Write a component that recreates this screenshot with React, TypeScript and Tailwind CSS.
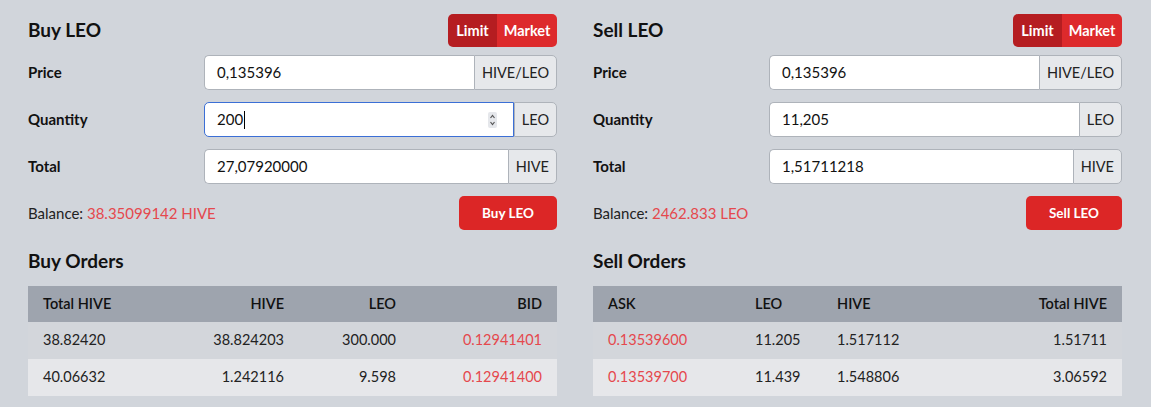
import React from "react";

function Field({ label, value, unit, focused, spinner }: { label: string; value: string; unit: string; focused?: boolean; spinner?: boolean }) {
  return (
    <div className="flex items-center">
      <div className="w-[176px] shrink-0 text-[15px] font-bold text-[#111]">{label}</div>
      <div className="flex h-[35px] flex-1">
        <div
          className={
            focused
              ? "flex flex-1 items-center rounded-l-[5px] border border-[#3b6fd6] bg-white pl-3 pr-3 text-[15px] text-[#111]"
              : "flex flex-1 items-center rounded-l-[5px] border border-r-0 border-[#aeb3ba] bg-white pl-3 pr-3 text-[15px] text-[#111]"
          }
        >
          <span>{value}</span>
          {focused && <span className="ml-[1px] h-[18px] w-[1px] bg-black" />}
          {spinner && (
            <svg className="ml-auto mr-[4px]" width="9" height="16" viewBox="0 0 9 16">
              <rect x="0" y="0" width="9" height="16" rx="2" fill="#e5e7eb" />
              <path d="M2.5 6 L4.5 3.5 L6.5 6" fill="none" stroke="#555" strokeWidth="1.2" />
              <path d="M2.5 10 L4.5 12.5 L6.5 10" fill="none" stroke="#555" strokeWidth="1.2" />
            </svg>
          )}
        </div>
        <div className="flex items-center rounded-r-[5px] border border-[#aeb3ba] bg-[#e6e8eb] px-[7px] text-[14.5px] text-[#222]">{unit}</div>
      </div>
    </div>
  );
}

function Panel({
  title,
  fields,
  balance,
  btn,
  ordersTitle,
  cols,
  aligns,
  header,
  rows,
  redCol,
}: {
  title: string;
  fields: { label: string; value: string; unit: string; focused?: boolean; spinner?: boolean }[];
  balance: string;
  btn: string;
  ordersTitle: string;
  cols: string;
  aligns: string[];
  header: string[];
  rows: string[][];
  redCol: number;
}) {
  return (
    <div className="flex flex-col">
      <div className="flex h-[33px] items-center justify-between">
        <div className="text-[19px] font-bold text-[#111]">{title}</div>
        <div className="flex h-[33px] overflow-hidden rounded-[5px] text-[14.5px] font-bold text-white">
          <div className="flex w-[49px] items-center justify-center bg-[#b51d21]">Limit</div>
          <div className="flex w-[60px] items-center justify-center bg-[#dd2a2c]">Market</div>
        </div>
      </div>
      <div className="mt-[8px] flex flex-col gap-[12px]">
        {fields.map((f) => (
          <Field key={f.label} {...f} />
        ))}
        <div className="flex items-center justify-between">
          <div className="text-[15px] text-[#222]">
            Balance: <span className="text-[#e5484d]">{balance}</span>
          </div>
          <button className="h-[34px] rounded-[5px] bg-[#dc2626] px-[23px] text-[13.5px] font-bold text-white">{btn}</button>
        </div>
      </div>
      <div className="mt-[17px] text-[19px] font-bold text-[#111]">{ordersTitle}</div>
      <div className="mt-[10px] flex flex-col text-[14.5px]">
        <div className={"grid h-[36px] items-center bg-[#9ea4ae] font-semibold text-[#111] " + cols}>
          {header.map((h, i) => (
            <div key={i} className={"px-[15px] " + aligns[i]}>
              {h}
            </div>
          ))}
        </div>
        {rows.map((r, ri) => (
          <div key={ri} className={"grid h-[37px] items-center " + cols + (ri % 2 === 1 ? " bg-[#e6e7ea]" : " bg-[#d3d6db]")}>
            {r.map((c, i) => (
              <div key={i} className={"px-[15px] " + aligns[i] + (i === redCol ? " text-[#e5484d]" : " text-[#222]")}>
                {c}
              </div>
            ))}
          </div>
        ))}
      </div>
    </div>
  );
}

export default function App() {
  return (
    <div
      className="grid h-[407px] w-[1151px] grid-cols-2 gap-[36px] bg-[#d1d5db] pl-[28px] pr-[29px] pt-[14px]"
      style={{ fontFamily: "Lato, 'Noto Sans', sans-serif" }}
    >
      <Panel
        title="Buy LEO"
        fields={[
          { label: "Price", value: "0,135396", unit: "HIVE/LEO" },
          { label: "Quantity", value: "200", unit: "LEO", focused: true, spinner: true },
          { label: "Total", value: "27,07920000", unit: "HIVE" },
        ]}
        balance="38.35099142 HIVE"
        btn="Buy LEO"
        ordersTitle="Buy Orders"
        cols="grid-cols-[135px_136px_112px_146px]"
        aligns={["text-left", "text-right", "text-right", "text-right"]}
        header={["Total HIVE", "HIVE", "LEO", "BID"]}
        rows={[
          ["38.82420", "38.824203", "300.000", "0.12941401"],
          ["40.06632", "1.242116", "9.598", "0.12941400"],
        ]}
        redCol={3}
      />
      <Panel
        title="Sell LEO"
        fields={[
          { label: "Price", value: "0,135396", unit: "HIVE/LEO" },
          { label: "Quantity", value: "11,205", unit: "LEO" },
          { label: "Total", value: "1,51711218", unit: "HIVE" },
        ]}
        balance="2462.833 LEO"
        btn="Sell LEO"
        ordersTitle="Sell Orders"
        cols="grid-cols-[147px_82px_150px_150px]"
        aligns={["text-left", "text-left", "text-left", "text-right"]}
        header={["ASK", "LEO", "HIVE", "Total HIVE"]}
        rows={[
          ["0.13539600", "11.205", "1.517112", "1.51711"],
          ["0.13539700", "11.439", "1.548806", "3.06592"],
        ]}
        redCol={0}
      />
    </div>
  );
}
